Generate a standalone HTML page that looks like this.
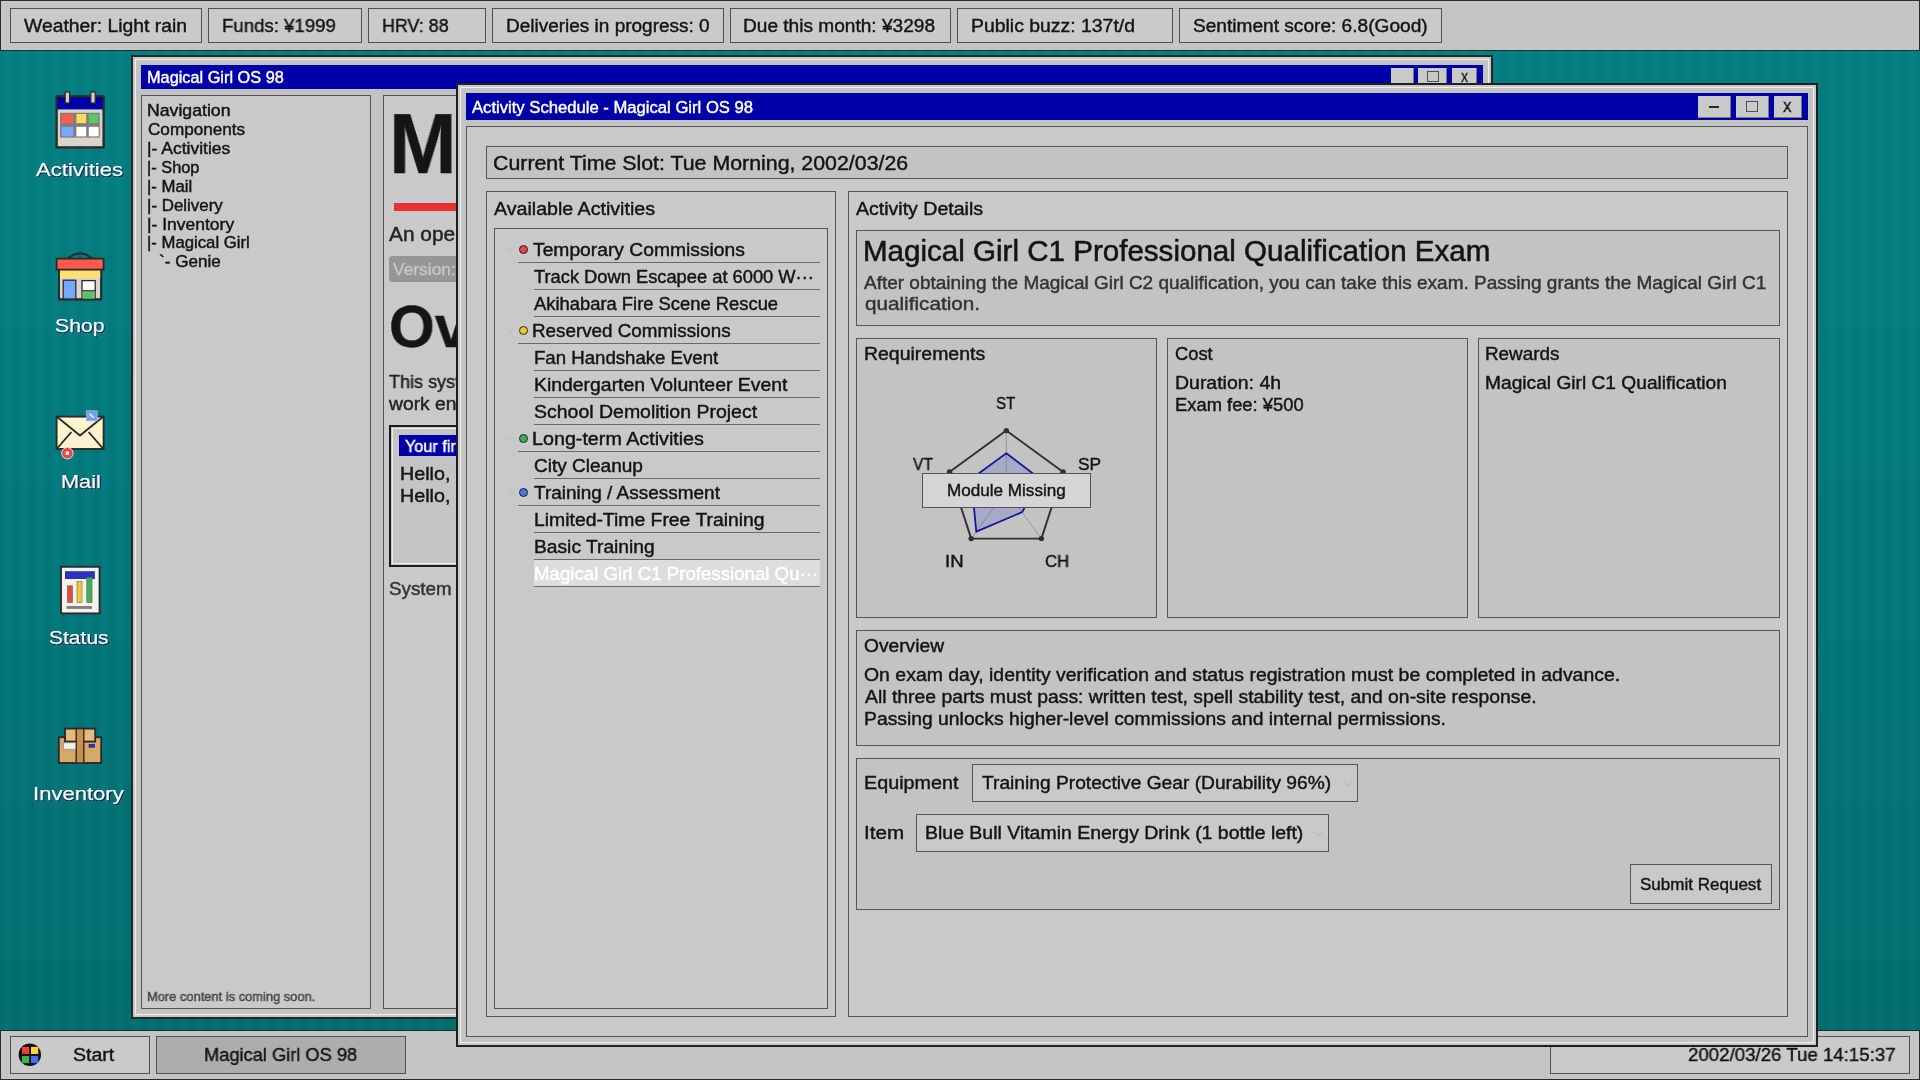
<!DOCTYPE html>
<html lang="en"><head><meta charset="utf-8"><title>Magical Girl OS 98</title>
<style>
html,body{margin:0;padding:0}
body{width:1920px;height:1080px;overflow:hidden;position:relative;font-family:"Liberation Sans",sans-serif;color:#141414;
 background:linear-gradient(to bottom,rgba(0,0,0,0) 0%,rgba(0,0,0,.02) 30%,rgba(0,0,0,.14) 100%),
 repeating-linear-gradient(90deg,#047a7d 0px,#047f82 4px,#048387 8px,#047f82 12px,#047a7d 16px);}
span{display:block;-webkit-text-stroke:0.42px currentColor;will-change:transform}
.win{position:absolute;box-sizing:border-box;border:2px solid #202020;background:#c3c3c3;box-shadow:inset 0 0 0 2px #c8c8c8;overflow:hidden}
.win>.bev{position:absolute;left:2px;top:2px;right:2px;bottom:2px;border:1px solid #eeeeee;box-sizing:border-box;pointer-events:none}
.tb{position:absolute;background:#0000a8}
.wb{position:absolute;box-sizing:border-box;background:#c9c9c9;border:1px solid #c9c9c9;border-right-color:#777;border-bottom-color:#777}
.lbl{text-shadow:1px 1px 0 #0b1f4d,0 1px 0 #0b1f4d;-webkit-text-stroke-width:0.25px}
.sep{position:absolute;height:1px;background:#6a6a6a}
.dot{position:absolute;width:9.2px;height:9.2px;border-radius:50%;box-sizing:border-box;border:1px solid #5a2a2a}
svg{position:absolute;overflow:visible}

</style></head>
<body>
<div id="desktop">
<svg style="left:0;top:0" width="160" height="840" viewBox="0 0 160 840">
<g stroke="#2b2b2b" stroke-width="1.9" stroke-linejoin="miter">
 <rect x="56.6" y="96.4" width="47" height="51" fill="#d9d5cb"/>
 <rect x="56.6" y="96.4" width="47" height="13" fill="#0000a8" stroke="none"/>
 <rect x="56.6" y="96.4" width="47" height="51" fill="none"/>
 <rect x="65.2" y="92" width="4.4" height="11" fill="#d6cfbf" stroke-width="1.2"/>
 <rect x="90.8" y="92" width="4.4" height="11" fill="#d6cfbf" stroke-width="1.2"/>
</g>
<rect x="60" y="112.8" width="39.8" height="24.8" fill="#7e7e7e"/>
<rect x="61.4" y="114" width="11.8" height="9.2" fill="#ff5a50"/>
<rect x="76.4" y="114" width="9.8" height="9.2" fill="#ffdc5f"/>
<rect x="88.8" y="114" width="9.8" height="9.2" fill="#5cc466"/>
<rect x="61.4" y="126.8" width="11.8" height="9.6" fill="#77a8ff"/>
<rect x="76.4" y="126.8" width="9.8" height="9.6" fill="#ffffff"/>
<rect x="88.8" y="126.8" width="9.8" height="9.6" fill="#ffffff"/>
<!-- shop -->
<path d="M67.6 259 Q80 247.8 92.4 259" fill="none" stroke="#2b2b2b" stroke-width="2.2"/>
<g stroke="#2b2b2b" stroke-width="1.9">
 <rect x="59" y="270" width="42.2" height="29.4" fill="#d9d5cb"/>
 <rect x="59" y="270" width="42.2" height="8" fill="#ffe070" stroke="none"/>
 <path d="M59 270V299.4H101.2V270" fill="none"/>
 <rect x="56.6" y="258.6" width="47" height="11" fill="#ff5a50"/>
 <rect x="63.2" y="280.2" width="12.6" height="18.8" fill="#77a8ff" stroke-width="1.3"/>
 <rect x="82" y="280.6" width="13.2" height="18.4" fill="#ffffff" stroke-width="1.3"/>
</g>
<rect x="82.7" y="291.4" width="11.8" height="7" fill="#5cc466"/>
<path d="M82 290.8H95.2" stroke="#2b2b2b" stroke-width="1.3"/>
<!-- mail -->
<g stroke="#2b2b2b" stroke-width="1.9" stroke-linejoin="miter" fill="none">
 <rect x="56.6" y="416.6" width="47" height="32.4" fill="#fff3cf"/>
 <path d="M56.6 416.6L80 435.6L103.4 416.6"/>
 <path d="M56.6 449L71.4 432"/>
 <path d="M103.4 449L88.6 432"/>
</g>
<rect x="86.4" y="410.8" width="10.8" height="10" fill="#6f9ff2" stroke="#aab4c8" stroke-width="0.8"/>
<path d="M89.4 413.6L93.6 417.6" stroke="#e8f0ff" stroke-width="1.6"/>
<circle cx="67.4" cy="453.2" r="5.7" fill="#ee4444" stroke="#f6d8d0" stroke-width="1"/>
<rect x="65.7" y="451.5" width="3.4" height="3.4" fill="#ffffff"/>
<!-- status -->
<rect x="61" y="566.8" width="38.6" height="46.6" fill="#f4f2ec" stroke="#2b2b2b" stroke-width="1.9"/>
<rect x="65" y="571.2" width="29.9" height="7.8" fill="#2a32c0"/>
<rect x="67.4" y="585.8" width="5" height="16.6" fill="#e24a4a" stroke="#8a5a4a" stroke-width="0.7"/>
<rect x="77" y="581.4" width="5" height="21" fill="#f1c83a" stroke="#8a7a4a" stroke-width="0.7"/>
<rect x="86.8" y="577.6" width="5.2" height="24.8" fill="#42b05a" stroke="#4a7a4a" stroke-width="0.7"/>
<rect x="66.5" y="606" width="25.5" height="2.9" fill="#808080"/>
<!-- inventory -->
<g stroke="#2b2b2b" stroke-width="1.9">
 <rect x="58.8" y="737.2" width="42.4" height="25.8" fill="#d8a867"/>
 <rect x="65" y="728.6" width="30.2" height="13" fill="#e8ba7a"/>
 <rect x="76.2" y="728.6" width="7.6" height="34.4" fill="#c89048" stroke-width="1.4"/>
</g>
<rect x="63.6" y="742.8" width="12" height="6.4" fill="#f2f0ea" stroke="#8a8a8a" stroke-width="0.7"/>
<rect x="88.6" y="744" width="6.3" height="3.7" fill="#2030c0"/>
</svg>
<span class="lbl" style="position:absolute;left:36.00px;top:160px;font-size:19.13px;line-height:1;white-space:pre;color:#ffffff;font-weight:400;transform-origin:0 0;transform:scaleX(1.1547);">Activities</span>
<span class="lbl" style="position:absolute;left:55.00px;top:316px;font-size:19.13px;line-height:1;white-space:pre;color:#ffffff;font-weight:400;transform-origin:0 0;transform:scaleX(1.1093);">Shop</span>
<span class="lbl" style="position:absolute;left:61.00px;top:472px;font-size:19.13px;line-height:1;white-space:pre;color:#ffffff;font-weight:400;transform-origin:0 0;transform:scaleX(1.1364);">Mail</span>
<span class="lbl" style="position:absolute;left:49.00px;top:628px;font-size:19.13px;line-height:1;white-space:pre;color:#ffffff;font-weight:400;transform-origin:0 0;transform:scaleX(1.1000);">Status</span>
<span class="lbl" style="position:absolute;left:33.00px;top:784px;font-size:19.13px;line-height:1;white-space:pre;color:#ffffff;font-weight:400;transform-origin:0 0;transform:scaleX(1.1538);">Inventory</span>
</div>
<div class="win" id="win1" style="left:131px;top:55px;width:1362px;height:964px;border-color:#262626"><div class="bev"></div></div>
<div class="tb" style="left:141px;top:65px;width:1342px;height:24px"></div>
<span style="position:absolute;left:147.00px;top:70px;font-size:15.94px;line-height:1;white-space:pre;color:#ffffff;font-weight:400;transform-origin:0 0;transform:scaleX(1.0227);">Magical Girl OS 98</span>
<div class="wb" style="left:1391px;top:68px;width:23px;height:19px"></div>
<div class="wb" style="left:1418px;top:68px;width:29px;height:19px"></div><div style="position:absolute;left:1427px;top:71px;width:12px;height:11px;box-sizing:border-box;border:1px solid #505050"></div>
<div class="wb" style="left:1452px;top:68px;width:25px;height:19px"></div>
<span style="position:absolute;left:1461.00px;top:71px;font-size:13.33px;line-height:1;white-space:pre;color:#111;font-weight:400;transform-origin:0 0;transform:scaleX(0.7889);-webkit-text-stroke-width:0.45px;">X</span>
<div style="position:absolute;left:141.00px;top:95.00px;width:230.00px;height:914.00px;box-sizing:border-box;background:#c9c9c9;border:1px solid #555555;"></div>
<span style="position:absolute;left:147.00px;top:103px;font-size:15.65px;line-height:1;white-space:pre;color:#141414;font-weight:400;transform-origin:0 0;transform:scaleX(1.1292);">Navigation</span>
<span style="position:absolute;left:148.00px;top:122px;font-size:15.65px;line-height:1;white-space:pre;color:#141414;font-weight:400;transform-origin:0 0;transform:scaleX(1.0943);">Components</span>
<span style="position:absolute;left:147.00px;top:141px;font-size:15.65px;line-height:1;white-space:pre;color:#141414;font-weight:400;transform-origin:0 0;transform:scaleX(1.1178);">|- Activities</span>
<span style="position:absolute;left:147.00px;top:160px;font-size:15.65px;line-height:1;white-space:pre;color:#141414;font-weight:400;transform-origin:0 0;transform:scaleX(1.0449);">|- Shop</span>
<span style="position:absolute;left:147.00px;top:179px;font-size:15.65px;line-height:1;white-space:pre;color:#141414;font-weight:400;transform-origin:0 0;transform:scaleX(1.0707);">|- Mail</span>
<span style="position:absolute;left:147.00px;top:198px;font-size:15.65px;line-height:1;white-space:pre;color:#141414;font-weight:400;transform-origin:0 0;transform:scaleX(1.0812);">|- Delivery</span>
<span style="position:absolute;left:147.00px;top:217px;font-size:15.65px;line-height:1;white-space:pre;color:#141414;font-weight:400;transform-origin:0 0;transform:scaleX(1.1182);">|- Inventory</span>
<span style="position:absolute;left:147.00px;top:235px;font-size:15.65px;line-height:1;white-space:pre;color:#141414;font-weight:400;transform-origin:0 0;transform:scaleX(1.0684);">|- Magical Girl</span>
<span style="position:absolute;left:159.00px;top:254px;font-size:15.65px;line-height:1;white-space:pre;color:#141414;font-weight:400;transform-origin:0 0;transform:scaleX(1.0945);">`- Genie</span>
<span style="position:absolute;left:147.00px;top:990px;font-size:13.41px;line-height:1;white-space:pre;color:#444;font-weight:400;transform-origin:0 0;transform:scaleX(0.9610);">More content is coming soon.</span>
<div style="position:absolute;left:383.00px;top:95.00px;width:1100.00px;height:914.00px;box-sizing:border-box;background:#c9c9c9;border:1px solid #555555;"></div>
<div id="w1c" style="position:absolute;left:384.2px;top:96.6px;width:1097px;height:911px;overflow:hidden">
</div>
<span style="position:absolute;left:389.00px;top:102px;font-size:84.35px;line-height:1;white-space:pre;color:#151515;font-weight:700;transform-origin:0 0;transform:scaleX(0.9630);">Magical Girl OS 98</span>
<div style="position:absolute;left:394px;top:202.8px;width:1000px;height:8.3px;background:#e63232"></div>
<span style="position:absolute;left:389.00px;top:225px;font-size:19.86px;line-height:1;white-space:pre;color:#222;font-weight:400;transform-origin:0 0;transform:scaleX(1.0520);">An operating system for magical girls.</span>
<div style="position:absolute;left:389px;top:256.2px;width:120px;height:25.5px;background:#969696;border-radius:3.5px"></div>
<span style="position:absolute;left:393.00px;top:261px;font-size:17.39px;line-height:1;white-space:pre;color:#c6c6c6;font-weight:400;transform-origin:0 0;transform:scaleX(1.0000);">Version: 0.9.8</span>
<span style="position:absolute;left:389.00px;top:297px;font-size:59.71px;line-height:1;white-space:pre;color:#151515;font-weight:700;transform-origin:0 0;transform:scaleX(0.9850);">Overview</span>
<span style="position:absolute;left:389.00px;top:373px;font-size:18.41px;line-height:1;white-space:pre;color:#222;font-weight:400;transform-origin:0 0;transform:scaleX(0.9790);">This system provides magical girls with a unified</span>
<span style="position:absolute;left:389.00px;top:395px;font-size:18.41px;line-height:1;white-space:pre;color:#222;font-weight:400;transform-origin:0 0;transform:scaleX(1.0480);">work environment.</span>
<div style="position:absolute;left:389.00px;top:425.00px;width:1082.00px;height:142.00px;box-sizing:border-box;background:#c4c4c4;border:2px solid #1b1b1b;box-shadow:inset 0 0 0 1px #c8c8c8,inset 0 0 0 2px #ececec;"></div>
<div style="position:absolute;left:399.1px;top:435px;width:300px;height:20.7px;background:#0000a8"></div>
<span style="position:absolute;left:405.00px;top:438px;font-size:17.10px;line-height:1;white-space:pre;color:#ffffff;font-weight:400;transform-origin:0 0;transform:scaleX(0.9510);">Your first task</span>
<span style="position:absolute;left:400.00px;top:465px;font-size:18.12px;line-height:1;white-space:pre;color:#151515;font-weight:400;transform-origin:0 0;transform:scaleX(1.0890);">Hello, world!</span>
<span style="position:absolute;left:400.00px;top:487px;font-size:18.12px;line-height:1;white-space:pre;color:#151515;font-weight:400;transform-origin:0 0;transform:scaleX(1.0890);">Hello, Magical Girl!</span>
<span style="position:absolute;left:389.00px;top:581px;font-size:17.97px;line-height:1;white-space:pre;color:#333;font-weight:400;transform-origin:0 0;transform:scaleX(1.0448);">System</span>
<div style="position:absolute;left:0.00px;top:1030.00px;width:1920.00px;height:50.00px;box-sizing:border-box;background:#c4c4c4;border:1px solid #2a2a2a;"></div>
<div style="position:absolute;left:10.00px;top:1036.00px;width:140.00px;height:38.00px;box-sizing:border-box;background:#cacaca;border:1px solid #505050;"></div>
<div style="position:absolute;left:156.00px;top:1036.00px;width:250.00px;height:38.00px;box-sizing:border-box;background:#adadad;border:1px solid #505050;"></div>
<div style="position:absolute;left:1550.00px;top:1036.00px;width:360.00px;height:38.00px;box-sizing:border-box;background:#cacaca;border:1px solid #505050;"></div>
<svg style="left:18px;top:1043px" width="24" height="24" viewBox="18 1043 24 24">
<circle cx="29.8" cy="1054.75" r="11.2" fill="#121212"/>
<rect x="22" y="1046.9" width="7.2" height="7.1" fill="#f03c3c"/>
<rect x="31" y="1046.9" width="7.2" height="7.1" fill="#ffd23c"/>
<rect x="22" y="1056" width="7.2" height="7.1" fill="#3cb450"/>
<rect x="31" y="1056" width="7.2" height="7.1" fill="#4a6cf0"/>
</svg>
<span style="position:absolute;left:73.00px;top:1045px;font-size:19.20px;line-height:1;white-space:pre;color:#141414;font-weight:400;transform-origin:0 0;transform:scaleX(1.0188);">Start</span>
<span style="position:absolute;left:204.00px;top:1045px;font-size:19.20px;line-height:1;white-space:pre;color:#141414;font-weight:400;transform-origin:0 0;transform:scaleX(0.9513);">Magical Girl OS 98</span>
<span style="position:absolute;left:1688.00px;top:1045px;font-size:19.20px;line-height:1;white-space:pre;color:#141414;font-weight:400;transform-origin:0 0;transform:scaleX(0.9729);">2002/03/26 Tue 14:15:37</span>
<div class="win" id="win2" style="left:456px;top:83px;width:1362px;height:964px"><div class="bev"></div></div>
<div class="tb" style="left:466px;top:93px;width:1342px;height:27px"></div>
<span style="position:absolute;left:472.00px;top:99px;font-size:16.09px;line-height:1;white-space:pre;color:#ffffff;font-weight:400;transform-origin:0 0;transform:scaleX(1.0347);">Activity Schedule - Magical Girl OS 98</span>
<div class="wb" style="left:1698px;top:96px;width:33px;height:22px"></div><div style="position:absolute;left:1709px;top:106px;width:10px;height:2px;background:#2a2a2a"></div>
<div class="wb" style="left:1736px;top:96px;width:33px;height:22px"></div><div style="position:absolute;left:1746px;top:101px;width:12px;height:11px;box-sizing:border-box;border:1px solid #505050"></div>
<div class="wb" style="left:1774px;top:96px;width:28px;height:22px"></div>
<span style="position:absolute;left:1783.00px;top:100px;font-size:14.20px;line-height:1;white-space:pre;color:#111;font-weight:400;transform-origin:0 0;transform:scaleX(0.9000);-webkit-text-stroke-width:0.5px;">X</span>
<div style="position:absolute;left:466.00px;top:126.00px;width:1342.00px;height:911.00px;box-sizing:border-box;background:#c9c9c9;border:1px solid #555555;"></div>
<div style="position:absolute;left:486.00px;top:146.00px;width:1302.00px;height:33.00px;box-sizing:border-box;background:#c3c3c3;border:1px solid #555555;"></div>
<span style="position:absolute;left:493.00px;top:154px;font-size:19.93px;line-height:1;white-space:pre;color:#141414;font-weight:400;transform-origin:0 0;transform:scaleX(1.0712);">Current Time Slot: Tue Morning, 2002/03/26</span>
<div style="position:absolute;left:486.00px;top:191.00px;width:350.00px;height:826.00px;box-sizing:border-box;background:#c9c9c9;border:1px solid #555555;"></div>
<span style="position:absolute;left:494.00px;top:200px;font-size:18.12px;line-height:1;white-space:pre;color:#141414;font-weight:400;transform-origin:0 0;transform:scaleX(1.0831);">Available Activities</span>
<div style="position:absolute;left:494.00px;top:228.00px;width:334.00px;height:781.00px;box-sizing:border-box;background:#c9c9c9;border:1px solid #555555;"></div>
<div class="sep" style="left:517.6px;top:262.00px;width:302.2px"></div>
<div class="dot" style="left:518.8px;top:244.80px;background:#e4484c;border-color:#2a1a1a"></div>
<svg style="left:506px;top:246.50px" width="9" height="6" viewBox="0 0 9 6"><path d="M1 1L4.5 4.5L8 1" fill="none" stroke="#bfbfbf" stroke-width="1.1"/></svg>
<span style="position:absolute;left:533.00px;top:242px;font-size:17.68px;line-height:1;white-space:pre;color:#141414;font-weight:400;transform-origin:0 0;transform:scaleX(1.0897);">Temporary Commissions</span>
<div class="sep" style="left:533.9px;top:289.00px;width:285.9px"></div>
<span style="position:absolute;left:534.00px;top:269px;font-size:17.68px;line-height:1;white-space:pre;color:#141414;font-weight:400;transform-origin:0 0;transform:scaleX(1.0349);">Track Down Escapee at 6000 W···</span>
<div class="sep" style="left:533.9px;top:316.00px;width:285.9px"></div>
<span style="position:absolute;left:534.00px;top:296px;font-size:17.68px;line-height:1;white-space:pre;color:#141414;font-weight:400;transform-origin:0 0;transform:scaleX(1.0397);">Akihabara Fire Scene Rescue</span>
<div class="sep" style="left:517.6px;top:343.00px;width:302.2px"></div>
<div class="dot" style="left:518.8px;top:325.80px;background:#e8c832;border-color:#2a241a"></div>
<svg style="left:506px;top:327.50px" width="9" height="6" viewBox="0 0 9 6"><path d="M1 1L4.5 4.5L8 1" fill="none" stroke="#bfbfbf" stroke-width="1.1"/></svg>
<span style="position:absolute;left:532.00px;top:323px;font-size:17.68px;line-height:1;white-space:pre;color:#141414;font-weight:400;transform-origin:0 0;transform:scaleX(1.0643);">Reserved Commissions</span>
<div class="sep" style="left:533.9px;top:370.00px;width:285.9px"></div>
<span style="position:absolute;left:534.00px;top:350px;font-size:17.68px;line-height:1;white-space:pre;color:#141414;font-weight:400;transform-origin:0 0;transform:scaleX(1.0534);">Fan Handshake Event</span>
<div class="sep" style="left:533.9px;top:397.00px;width:285.9px"></div>
<span style="position:absolute;left:534.00px;top:377px;font-size:17.68px;line-height:1;white-space:pre;color:#141414;font-weight:400;transform-origin:0 0;transform:scaleX(1.0974);">Kindergarten Volunteer Event</span>
<div class="sep" style="left:533.9px;top:424.00px;width:285.9px"></div>
<span style="position:absolute;left:534.00px;top:404px;font-size:17.68px;line-height:1;white-space:pre;color:#141414;font-weight:400;transform-origin:0 0;transform:scaleX(1.1025);">School Demolition Project</span>
<div class="sep" style="left:517.6px;top:451.00px;width:302.2px"></div>
<div class="dot" style="left:518.8px;top:433.80px;background:#44aa54;border-color:#1a2a1e"></div>
<svg style="left:506px;top:435.50px" width="9" height="6" viewBox="0 0 9 6"><path d="M1 1L4.5 4.5L8 1" fill="none" stroke="#bfbfbf" stroke-width="1.1"/></svg>
<span style="position:absolute;left:532.00px;top:431px;font-size:17.68px;line-height:1;white-space:pre;color:#141414;font-weight:400;transform-origin:0 0;transform:scaleX(1.1150);">Long-term Activities</span>
<div class="sep" style="left:533.9px;top:478.00px;width:285.9px"></div>
<span style="position:absolute;left:534.00px;top:458px;font-size:17.68px;line-height:1;white-space:pre;color:#141414;font-weight:400;transform-origin:0 0;transform:scaleX(1.0760);">City Cleanup</span>
<div class="sep" style="left:517.6px;top:505.00px;width:302.2px"></div>
<div class="dot" style="left:518.8px;top:487.80px;background:#4a78e8;border-color:#1a1e2e"></div>
<svg style="left:506px;top:489.50px" width="9" height="6" viewBox="0 0 9 6"><path d="M1 1L4.5 4.5L8 1" fill="none" stroke="#bfbfbf" stroke-width="1.1"/></svg>
<span style="position:absolute;left:534.00px;top:485px;font-size:17.68px;line-height:1;white-space:pre;color:#141414;font-weight:400;transform-origin:0 0;transform:scaleX(1.0734);">Training / Assessment</span>
<div class="sep" style="left:533.9px;top:532.00px;width:285.9px"></div>
<span style="position:absolute;left:534.00px;top:512px;font-size:17.68px;line-height:1;white-space:pre;color:#141414;font-weight:400;transform-origin:0 0;transform:scaleX(1.0957);">Limited-Time Free Training</span>
<div class="sep" style="left:533.9px;top:559.00px;width:285.9px"></div>
<span style="position:absolute;left:534.00px;top:539px;font-size:17.68px;line-height:1;white-space:pre;color:#141414;font-weight:400;transform-origin:0 0;transform:scaleX(1.0872);">Basic Training</span>
<div style="position:absolute;left:533.9px;top:560.40px;width:285.9px;height:25.6px;background:#dddddd"></div>
<div class="sep" style="left:533.9px;top:586.00px;width:285.9px"></div>
<span style="position:absolute;left:534.00px;top:566px;font-size:17.68px;line-height:1;white-space:pre;color:#ffffff;font-weight:400;transform-origin:0 0;transform:scaleX(1.0560);">Magical Girl C1 Professional Qu···</span>
<div style="position:absolute;left:848.00px;top:191.00px;width:940.00px;height:826.00px;box-sizing:border-box;background:#c9c9c9;border:1px solid #555555;"></div>
<span style="position:absolute;left:856.00px;top:200px;font-size:18.12px;line-height:1;white-space:pre;color:#141414;font-weight:400;transform-origin:0 0;transform:scaleX(1.0791);">Activity Details</span>
<div style="position:absolute;left:856.00px;top:230.00px;width:924.00px;height:96.00px;box-sizing:border-box;background:#c3c3c3;border:1px solid #555555;"></div>
<span style="position:absolute;left:863.00px;top:237px;font-size:28.99px;line-height:1;white-space:pre;color:#141414;font-weight:400;transform-origin:0 0;transform:scaleX(1.0196);-webkit-text-stroke-width:0.55px;">Magical Girl C1 Professional Qualification Exam</span>
<span style="position:absolute;left:864.00px;top:275px;font-size:17.97px;line-height:1;white-space:pre;color:#333;font-weight:400;transform-origin:0 0;transform:scaleX(1.0576);">After obtaining the Magical Girl C2 qualification, you can take this exam. Passing grants the Magical Girl C1</span>
<span style="position:absolute;left:865.00px;top:296px;font-size:17.97px;line-height:1;white-space:pre;color:#333;font-weight:400;transform-origin:0 0;transform:scaleX(1.1520);">qualification.</span>
<div style="position:absolute;left:856.00px;top:338.00px;width:301.00px;height:280.00px;box-sizing:border-box;background:#c3c3c3;border:1px solid #555555;"></div>
<div style="position:absolute;left:1167.00px;top:338.00px;width:301.00px;height:280.00px;box-sizing:border-box;background:#c3c3c3;border:1px solid #555555;"></div>
<div style="position:absolute;left:1478.00px;top:338.00px;width:302.00px;height:280.00px;box-sizing:border-box;background:#c3c3c3;border:1px solid #555555;"></div>
<span style="position:absolute;left:864.00px;top:345px;font-size:18.12px;line-height:1;white-space:pre;color:#141414;font-weight:400;transform-origin:0 0;transform:scaleX(1.0743);">Requirements</span>
<span style="position:absolute;left:1175.00px;top:345px;font-size:18.12px;line-height:1;white-space:pre;color:#141414;font-weight:400;transform-origin:0 0;transform:scaleX(1.0125);">Cost</span>
<span style="position:absolute;left:1485.00px;top:345px;font-size:18.12px;line-height:1;white-space:pre;color:#141414;font-weight:400;transform-origin:0 0;transform:scaleX(1.0414);">Rewards</span>
<span style="position:absolute;left:1175.00px;top:374px;font-size:18.12px;line-height:1;white-space:pre;color:#141414;font-weight:400;transform-origin:0 0;transform:scaleX(1.0747);">Duration: 4h</span>
<span style="position:absolute;left:1175.00px;top:396px;font-size:18.12px;line-height:1;white-space:pre;color:#141414;font-weight:400;transform-origin:0 0;transform:scaleX(1.0140);">Exam fee: ¥500</span>
<span style="position:absolute;left:1485.00px;top:374px;font-size:18.12px;line-height:1;white-space:pre;color:#141414;font-weight:400;transform-origin:0 0;transform:scaleX(1.0586);">Magical Girl C1 Qualification</span>
<svg style="left:0;top:0" width="1920" height="1080" viewBox="0 0 1920 1080"><line x1="1006.3" y1="490.3" x2="1006.3" y2="430.6" stroke="#8a8a8a" stroke-width="0.8"/><line x1="1006.3" y1="490.3" x2="1063.1" y2="471.9" stroke="#8a8a8a" stroke-width="0.8"/><line x1="1006.3" y1="490.3" x2="1041.4" y2="538.6" stroke="#8a8a8a" stroke-width="0.8"/><line x1="1006.3" y1="490.3" x2="971.2" y2="538.6" stroke="#8a8a8a" stroke-width="0.8"/><line x1="1006.3" y1="490.3" x2="949.5" y2="471.9" stroke="#8a8a8a" stroke-width="0.8"/><polygon points="1006.3,453.3 1040.5,479.2 1022.2,512.1 976.3,531.6 971.1,478.9" fill="rgba(90,100,210,0.26)" stroke="#1414a0" stroke-width="1.8" stroke-linejoin="miter"/><polygon points="1006.3,430.6 1063.1,471.9 1041.4,538.6 971.2,538.6 949.5,471.9" fill="none" stroke="#303030" stroke-width="1.9" stroke-linejoin="round"/><circle cx="1006.3" cy="430.6" r="2.7" fill="#303030"/><circle cx="1063.1" cy="471.9" r="2.7" fill="#303030"/><circle cx="1041.4" cy="538.6" r="2.7" fill="#303030"/><circle cx="971.2" cy="538.6" r="2.7" fill="#303030"/><circle cx="949.5" cy="471.9" r="2.7" fill="#303030"/></svg>
<span style="position:absolute;left:996.00px;top:395px;font-size:17.10px;line-height:1;white-space:pre;color:#141414;font-weight:400;transform-origin:0 0;transform:scaleX(0.8762);">ST</span>
<span style="position:absolute;left:913.00px;top:456px;font-size:17.10px;line-height:1;white-space:pre;color:#141414;font-weight:400;transform-origin:0 0;transform:scaleX(0.9091);">VT</span>
<span style="position:absolute;left:1078.00px;top:456px;font-size:17.10px;line-height:1;white-space:pre;color:#141414;font-weight:400;transform-origin:0 0;transform:scaleX(1.0143);">SP</span>
<span style="position:absolute;left:945.00px;top:553px;font-size:17.10px;line-height:1;white-space:pre;color:#141414;font-weight:400;transform-origin:0 0;transform:scaleX(1.0867);">IN</span>
<span style="position:absolute;left:1045.00px;top:553px;font-size:17.10px;line-height:1;white-space:pre;color:#141414;font-weight:400;transform-origin:0 0;transform:scaleX(0.9783);">CH</span>
<div style="position:absolute;left:922.00px;top:473.00px;width:169.00px;height:35.00px;box-sizing:border-box;background:#d5d5d5;border:1px solid #555555;"></div>
<span style="position:absolute;left:947.00px;top:482px;font-size:17.10px;line-height:1;white-space:pre;color:#141414;font-weight:400;transform-origin:0 0;transform:scaleX(0.9974);">Module Missing</span>
<div style="position:absolute;left:856.00px;top:630.00px;width:924.00px;height:116.00px;box-sizing:border-box;background:#c3c3c3;border:1px solid #555555;"></div>
<span style="position:absolute;left:864.00px;top:637px;font-size:18.12px;line-height:1;white-space:pre;color:#141414;font-weight:400;transform-origin:0 0;transform:scaleX(1.0600);">Overview</span>
<span style="position:absolute;left:864.00px;top:666px;font-size:18.12px;line-height:1;white-space:pre;color:#141414;font-weight:400;transform-origin:0 0;transform:scaleX(1.0737);">On exam day, identity verification and status registration must be completed in advance.</span>
<span style="position:absolute;left:865.00px;top:688px;font-size:18.12px;line-height:1;white-space:pre;color:#141414;font-weight:400;transform-origin:0 0;transform:scaleX(1.0694);">All three parts must pass: written test, spell stability test, and on-site response.</span>
<span style="position:absolute;left:864.00px;top:710px;font-size:18.12px;line-height:1;white-space:pre;color:#141414;font-weight:400;transform-origin:0 0;transform:scaleX(1.0668);">Passing unlocks higher-level commissions and internal permissions.</span>
<div style="position:absolute;left:856.00px;top:758.00px;width:924.00px;height:152.00px;box-sizing:border-box;background:#c3c3c3;border:1px solid #555555;"></div>
<span style="position:absolute;left:864.00px;top:774px;font-size:18.12px;line-height:1;white-space:pre;color:#141414;font-weight:400;transform-origin:0 0;transform:scaleX(1.0901);">Equipment</span>
<div style="position:absolute;left:972.00px;top:764.00px;width:386.00px;height:38.00px;box-sizing:border-box;background:#c9c9c9;border:1px solid #555555;"></div>
<span style="position:absolute;left:982.00px;top:774px;font-size:18.12px;line-height:1;white-space:pre;color:#141414;font-weight:400;transform-origin:0 0;transform:scaleX(1.0599);">Training Protective Gear (Durability 96%)</span>
<svg style="left:1342px;top:780px" width="11" height="7" viewBox="0 0 11 7"><path d="M1 1L5.5 5.5L10 1" fill="none" stroke="#bbbbbb" stroke-width="1.1"/></svg>
<span style="position:absolute;left:864.00px;top:824px;font-size:18.12px;line-height:1;white-space:pre;color:#141414;font-weight:400;transform-origin:0 0;transform:scaleX(1.1364);">Item</span>
<div style="position:absolute;left:916.00px;top:814.00px;width:413.00px;height:38.00px;box-sizing:border-box;background:#c9c9c9;border:1px solid #555555;"></div>
<span style="position:absolute;left:925.00px;top:824px;font-size:18.12px;line-height:1;white-space:pre;color:#141414;font-weight:400;transform-origin:0 0;transform:scaleX(1.0750);">Blue Bull Vitamin Energy Drink (1 bottle left)</span>
<svg style="left:1313px;top:830px" width="11" height="7" viewBox="0 0 11 7"><path d="M1 1L5.5 5.5L10 1" fill="none" stroke="#bbbbbb" stroke-width="1.1"/></svg>
<div style="position:absolute;left:1630.00px;top:864.00px;width:142.00px;height:40.00px;box-sizing:border-box;background:#c9c9c9;border:1px solid #555555;"></div>
<span style="position:absolute;left:1640.00px;top:877px;font-size:16.96px;line-height:1;white-space:pre;color:#141414;font-weight:400;transform-origin:0 0;transform:scaleX(1.0050);">Submit Request</span>
<div style="position:absolute;left:0.00px;top:0.00px;width:1920.00px;height:51.00px;box-sizing:border-box;background:#c4c4c4;border:1px solid #2a2a2a;"></div>
<div style="position:absolute;left:10.00px;top:8.00px;width:192.00px;height:35.00px;box-sizing:border-box;background:#cacaca;border:1px solid #505050;"></div>
<span style="position:absolute;left:24.00px;top:16px;font-size:18.99px;line-height:1;white-space:pre;color:#141414;font-weight:400;transform-origin:0 0;transform:scaleX(1.0189);">Weather: Light rain</span>
<div style="position:absolute;left:208.00px;top:8.00px;width:154.00px;height:35.00px;box-sizing:border-box;background:#cacaca;border:1px solid #505050;"></div>
<span style="position:absolute;left:222.00px;top:16px;font-size:18.99px;line-height:1;white-space:pre;color:#141414;font-weight:400;transform-origin:0 0;transform:scaleX(0.9803);">Funds: ¥1999</span>
<div style="position:absolute;left:368.00px;top:8.00px;width:118.00px;height:35.00px;box-sizing:border-box;background:#cacaca;border:1px solid #505050;"></div>
<span style="position:absolute;left:382.00px;top:16px;font-size:18.99px;line-height:1;white-space:pre;color:#141414;font-weight:400;transform-origin:0 0;transform:scaleX(0.9420);">HRV: 88</span>
<div style="position:absolute;left:492.00px;top:8.00px;width:232.00px;height:35.00px;box-sizing:border-box;background:#cacaca;border:1px solid #505050;"></div>
<span style="position:absolute;left:506.00px;top:16px;font-size:18.99px;line-height:1;white-space:pre;color:#141414;font-weight:400;transform-origin:0 0;transform:scaleX(1.0000);">Deliveries in progress: 0</span>
<div style="position:absolute;left:730.00px;top:8.00px;width:221.00px;height:35.00px;box-sizing:border-box;background:#cacaca;border:1px solid #505050;"></div>
<span style="position:absolute;left:743.00px;top:16px;font-size:18.99px;line-height:1;white-space:pre;color:#141414;font-weight:400;transform-origin:0 0;transform:scaleX(1.0053);">Due this month: ¥3298</span>
<div style="position:absolute;left:957.00px;top:8.00px;width:216.00px;height:35.00px;box-sizing:border-box;background:#cacaca;border:1px solid #505050;"></div>
<span style="position:absolute;left:971.00px;top:16px;font-size:18.99px;line-height:1;white-space:pre;color:#141414;font-weight:400;transform-origin:0 0;transform:scaleX(1.0222);">Public buzz: 137t/d</span>
<div style="position:absolute;left:1179.00px;top:8.00px;width:263.00px;height:35.00px;box-sizing:border-box;background:#cacaca;border:1px solid #505050;"></div>
<span style="position:absolute;left:1193.00px;top:16px;font-size:18.99px;line-height:1;white-space:pre;color:#141414;font-weight:400;transform-origin:0 0;transform:scaleX(1.0061);">Sentiment score: 6.8(Good)</span>
</body></html>
